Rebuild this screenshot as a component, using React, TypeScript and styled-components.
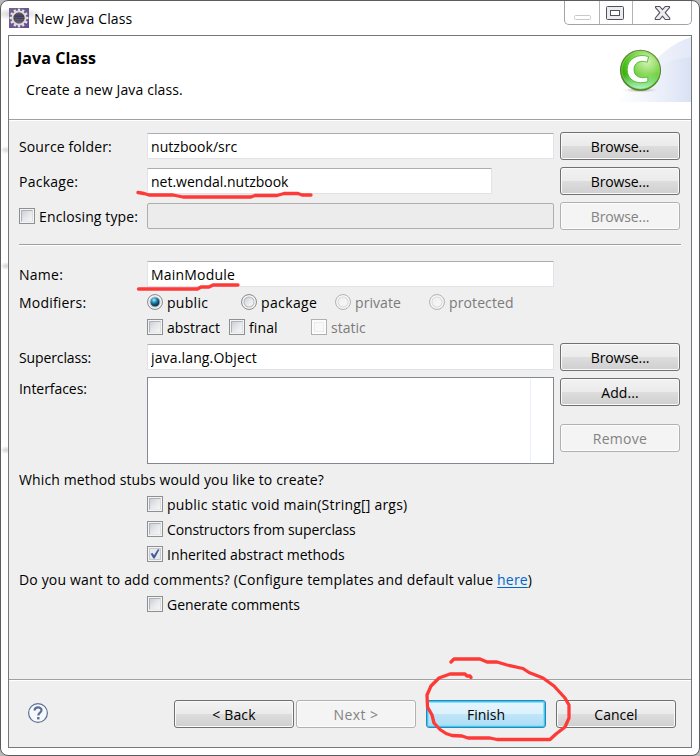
import React from "react";
import styled, { createGlobalStyle, css } from "styled-components";

const GlobalStyle = createGlobalStyle`
  *, *::before, *::after { box-sizing: border-box; }
  body { margin: 0; background: #b9b9b9; }
  button, input, textarea { font: inherit; margin: 0; }
`;

const Window = styled.div`
  position: relative;
  width: 700px;
  height: 756px;
  padding: 0 7px 7px 7px;
  display: flex;
  flex-direction: column;
  background:
    radial-gradient(ellipse 6px 4px at 5px 149px, #d8d8d8, transparent),
    radial-gradient(ellipse 6px 4px at 5px 265px, #d2d2d2, transparent),
    radial-gradient(ellipse 6px 4px at 5px 449px, #d2d2d2, transparent),
    radial-gradient(ellipse 26px 6px at 16px 13px, #cccccc, transparent),
    #fff;
  border: 1px solid #5c5c5e;
  border-radius: 8px;
  overflow: hidden;
  font-family: "Open Sans", "Noto Sans", sans-serif;
  font-size: 14px;
  line-height: 20px;
  color: #000;
`;

const TitleBar = styled.header`
  height: 34px;
  flex: none;
  display: flex;
  align-items: flex-start;
  padding-left: 1px;
`;

const TitleIcon = styled.svg`
  flex: none;
  margin-top: 7px;
`;

const Title = styled.div`
  flex: 1;
  padding: 8px 0 0 5px;
  letter-spacing: 0.15px;
`;

const Caption = styled.div`
  display: flex;
  height: 24px;
  width: 128px;
  border: 1px solid #a3a3a6;
  border-top: 0;
  border-radius: 0 0 5px 5px;
`;

const CaptionButton = styled.button<{ $w: number }>`
  width: ${(p) => p.$w}px;
  padding: 0;
  border: 0;
  background: none;
  display: block;
  & + & { border-left: 1px solid #b4b4b6; }
  svg { display: block; }
`;

const Client = styled.main`
  flex: 1;
  display: flex;
  flex-direction: column;
  border: 1px solid #77787a;
  background: #efefef;
`;

const Banner = styled.section`
  height: 84px;
  flex: none;
  display: flex;
  justify-content: space-between;
  background: #fff;
  border-bottom: 1px solid #a0a0a0;
`;

const BannerText = styled.div`
  padding: 12px 0 0 8px;
`;

const Heading = styled.h1`
  margin: 0;
  font-size: 16px;
  font-weight: 700;
  line-height: 20px;
  letter-spacing: 0.05px;
`;

const Description = styled.p`
  margin: 12px 0 0 9px;
  letter-spacing: 0.12px;
`;

const Form = styled.section`
  flex: 1;
  border-top: 1px solid #fff;
  padding: 11px 9px 0 10px;
`;

const Row = styled.div<{ $h?: number; $top?: number }>`
  display: grid;
  grid-template-columns: 128px 407px 120px;
  align-items: center;
  height: ${(p) => p.$h ?? 28}px;
  margin-top: ${(p) => p.$top ?? 0}px;
  & > :nth-child(3) { margin-left: 6px; }
`;

const Text = styled.span<{ $ls?: number; $dim?: boolean }>`
  display: block;
  padding-top: 2px;
  white-space: nowrap;
  letter-spacing: ${(p) => p.$ls ?? 0}px;
  ${(p) => p.$dim && css`color: #7b7b7b;`}
`;

const Input = styled.input<{ $w?: number; $ls?: number }>`
  width: ${(p) => p.$w ?? 407}px;
  height: 26px;
  padding: 1px 3px 0;
  border: 1px solid #e2e3ea;
  border-top-color: #abadb3;
  border-radius: 1px;
  background: #fff;
  color: #000;
  letter-spacing: ${(p) => p.$ls ?? 0}px;
  outline: 0;
  &:disabled {
    background: #ececec;
    border-color: #afafaf;
    border-radius: 2px;
  }
`;

const PushButton = styled.button<{ $ls?: number; $primary?: boolean }>`
  width: 120px;
  height: 28px;
  padding: 1px 0 0;
  border: 1px solid #707070;
  border-radius: 3px;
  color: #000;
  line-height: 20px;
  letter-spacing: ${(p) => p.$ls ?? 0}px;
  background: linear-gradient(#f2f2f2 0, #ebebeb 50%, #dddddd 50%, #cfcfcf 100%);
  box-shadow: inset 0 0 0 1px #fafafa;
  &:disabled {
    color: #838383;
    background: #f4f4f4;
    border-color: #adb2b5;
    box-shadow: inset 0 0 0 1px #fcfcfc;
  }
  ${(p) =>
    p.$primary &&
    css`
      border-color: #3c7fb1;
      background: linear-gradient(#e8f5fd 0, #dbf1fc 50%, #c0e6f9 50%, #aedcf4 100%);
      box-shadow: inset 0 0 0 1px #2ccdfb, inset 0 0 0 2px #86e2fc;
    `}
`;

const Separator = styled.hr`
  width: 662px;
  height: 2px;
  margin: 14px 0 0;
  border: 0;
  border-top: 1px solid #a0a0a0;
  background: #fff;
`;

const Options = styled.div<{ $cols: string }>`
  display: grid;
  grid-template-columns: ${(p) => p.$cols};
  align-items: center;
`;

const Option = styled.label`
  display: flex;
  align-items: center;
  gap: 4px;
  height: 20px;
`;

const Box = styled.span<{ $off?: boolean }>`
  width: 16px;
  height: 16px;
  flex: none;
  border: 1px solid ${(p) => (p.$off ? "#b1b1b1" : "#8e8f8f")};
  background: #f4f4f4;
  padding: 1px;
  display: block;
  &::before {
    content: "";
    display: ${(p) => (p.$off ? "none" : "block")};
    width: 12px;
    height: 12px;
    border: 1px solid #aeb3b9;
    border-right-color: #dcdfe2;
    border-bottom-color: #e6e8ea;
    background: linear-gradient(135deg, #cbcfd5 0%, #e6e7ea 50%, #f6f6f6 100%);
  }
  ${(p) =>
    p.$off &&
    css`
      background: #f8f8f8;
      box-shadow: inset 0 0 0 2px #fcfcfc, inset 0 0 0 3px #ececec;
    `}
`;

const CheckedBox = styled.svg`
  flex: none;
  display: block;
`;

const Radio = styled.span<{ $on?: boolean; $off?: boolean }>`
  width: 16px;
  height: 16px;
  flex: none;
  border-radius: 50%;
  border: 1px solid ${(p) => (p.$off ? "#b5b5b5" : "#8e8f8f")};
  box-shadow: inset 0 0 0 1.5px #f6f6f6, inset 0 0 0 2.5px ${(p) => (p.$off ? "#d8d8d8" : "#b4b8bd")};
  background: ${(p) =>
    p.$on
      ? "radial-gradient(circle at 50% 50%, transparent 4.4px, #e6ebee 5.2px), radial-gradient(circle at 6px 5px, #bdf0fb 0, #38a5cf 2px, #125c86 4.2px, #0b3450 6px)"
      : p.$off
        ? "linear-gradient(135deg, #ededed, #fafafa)"
        : "linear-gradient(135deg, #c8ccd2 15%, #e8e9eb 50%, #fafafa 85%)"};
`;

const TextArea = styled.div`
  height: 87px;
  border: 1px solid #828790;
  background: #fff;
  padding: 1px 22px 1px 0;
  &::after {
    content: "";
    display: block;
    height: 100%;
    border-right: 1px solid #e8f1fb;
  }
`;

const ListRow = styled(Row)`
  align-items: start;
`;

const ButtonStack = styled.div`
  display: flex;
  flex-direction: column;
  gap: 18px;
  padding-top: 1px;
`;

const Line = styled.div<{ $indent?: boolean; $top?: number }>`
  height: 25px;
  display: flex;
  align-items: center;
  margin-top: ${(p) => p.$top ?? 0}px;
  padding-bottom: 1px;
  padding-left: ${(p) => (p.$indent ? 128 : 0)}px;
`;

const Link = styled.a`
  color: #0066cc;
  text-decoration: underline;
  text-underline-offset: 2px;
`;

const Footer = styled.footer`
  height: 68px;
  flex: none;
  display: flex;
  align-items: center;
  padding: 1px 15px 0 18px;
  border-top: 1px solid #a0a0a0;
  box-shadow: inset 0 1px 0 #fff;
`;

const HelpIcon = styled.svg`
  margin: 0 auto 2px 0;
`;

const FooterButtons = styled.div<{ $gap: number; $left?: number }>`
  display: flex;
  gap: ${(p) => p.$gap}px;
  margin-left: ${(p) => p.$left ?? 0}px;
`;

const Marks = styled.svg`
  position: absolute;
  left: -1px;
  top: -1px;
  pointer-events: none;
`;

function AppIcon() {
  const teeth = Array.from({ length: 12 }, (_, i) => i * 30);
  return (
    <TitleIcon width="20" height="20" viewBox="0 0 20 20">
      <defs>
        <linearGradient id="tile" x1="0" y1="0" x2="1" y2="1">
          <stop offset="0" stopColor="#72658c" />
          <stop offset="1" stopColor="#65499a" />
        </linearGradient>
        <linearGradient id="core" x1="0" y1="0" x2="0" y2="1">
          <stop offset="0" stopColor="#6a6580" />
          <stop offset="0.45" stopColor="#38344c" />
          <stop offset="1" stopColor="#77718c" />
        </linearGradient>
      </defs>
      <rect width="20" height="20" fill="url(#tile)" />
      {teeth.map((a) => (
        <rect key={a} x="8.8" y="0.6" width="2.4" height="4" fill="#e3e0d8" transform={`rotate(${a} 10 10)`} />
      ))}
      <circle cx="10" cy="10" r="6.6" fill="url(#core)" stroke="#dedbd4" strokeWidth="1.9" />
      <path d="M5 9.5h10M5.5 11.5h9" stroke="#6b6784" strokeWidth=".6" />
    </TitleIcon>
  );
}

function ClassBanner() {
  return (
    <svg width="75" height="66" viewBox="0 0 75 66">
      <defs>
        <linearGradient id="sky" x1="0" y1="0" x2="1" y2="0">
          <stop offset="0" stopColor="#fff" />
          <stop offset="0.55" stopColor="#eef2fb" />
          <stop offset="1" stopColor="#e3e9f7" />
        </linearGradient>
        <linearGradient id="sky2" x1="0" y1="0" x2="1" y2="0">
          <stop offset="0" stopColor="#fff" stopOpacity="0" />
          <stop offset="1" stopColor="#d9e1f4" />
        </linearGradient>
        <radialGradient id="ball" cx="0.66" cy="0.28" r="0.8">
          <stop offset="0" stopColor="#d3f3b8" />
          <stop offset="0.38" stopColor="#8fdb60" />
          <stop offset="0.72" stopColor="#43bd14" />
          <stop offset="1" stopColor="#279006" />
        </radialGradient>
        <linearGradient id="glow" x1="0" y1="0" x2="0" y2="1">
          <stop offset="0.6" stopColor="#b8ffd8" stopOpacity="0" />
          <stop offset="1" stopColor="#c4ffe6" stopOpacity="0.9" />
        </linearGradient>
        <radialGradient id="shade">
          <stop offset="0" stopColor="#8a7c80" />
          <stop offset="1" stopColor="#fff" stopOpacity="0" />
        </radialGradient>
      </defs>
      <path d="M0 66C22 54 35 14 75 1v65z" fill="url(#sky)" />
      <path d="M2 66C20 46 40 24 75 21v45z" fill="url(#sky2)" />
      <ellipse cx="24.5" cy="54" rx="21" ry="3" fill="url(#shade)" />
      <circle cx="24.5" cy="34.3" r="20" fill="url(#ball)" stroke="#5f7d38" strokeWidth="1.1" />
      <circle cx="24.5" cy="34.3" r="18.6" fill="url(#glow)" stroke="#8fe05e" strokeWidth="0.8" strokeOpacity="0.7" />
      <path
        d="M32.6 20.6C22.500 17 11.200 22.500 11.200 33.500C11.200 44.800 21.500 48.800 31.800 45.700L31.800 41C25 43 18 40.800 18 33.500C18 26.700 24.500 23.500 31.200 26.300Z"
        fill="#fff"
        stroke="#55b52c"
        strokeWidth="0.9"
        strokeLinejoin="round"
      />
    </svg>
  );
}

function Check({ label, ls, off, checked }: { label: string; ls?: number; off?: boolean; checked?: boolean }) {
  return (
    <Option>
      {checked ? (
        <CheckedBox width="16" height="16" viewBox="0 0 16 16">
          <rect x=".5" y=".5" width="15" height="15" fill="#f4f4f4" stroke="#8e8f8f" />
          <rect x="2.5" y="2.5" width="11" height="11" fill="#e7e9ec" stroke="#c6cad0" />
          <path d="M3.600 7.800 5.600 7 7 9.200 10.800 3.200 12.500 3.400 7.600 12.600 6.400 12.600Z" fill="#435a9c" />
        </CheckedBox>
      ) : (
        <Box $off={off} />
      )}
      <Text $ls={ls} $dim={off}>{label}</Text>
    </Option>
  );
}

function RadioOption({ label, ls, on, off }: { label: string; ls?: number; on?: boolean; off?: boolean }) {
  return (
    <Option>
      <Radio $on={on} $off={off} />
      <Text $ls={ls} $dim={off}>{label}</Text>
    </Option>
  );
}

export default function App() {
  return (
    <>
      <GlobalStyle />
      <Window>
        <TitleBar>
          <AppIcon />
          <Title>New Java Class</Title>
          <Caption>
            <CaptionButton $w={34} aria-label="Minimize">
              <svg width="34" height="23" viewBox="0 0 34 23">
                <rect x="9.5" y="14.5" width="16" height="4" rx="1" fill="#fff" stroke="#c9c9cb" />
              </svg>
            </CaptionButton>
            <CaptionButton $w={33} aria-label="Maximize">
              <svg width="32" height="23" viewBox="0 0 32 23">
                <rect x="6.5" y="5.5" width="17" height="13" rx="1" fill="#ececee" stroke="#50515f" />
                <rect x="10.5" y="9.5" width="9" height="5" fill="#fff" stroke="#50515f" />
              </svg>
            </CaptionButton>
            <CaptionButton $w={59} aria-label="Close">
              <svg width="58" height="23" viewBox="0 0 58 23">
                <path
                  d="M22.5 5.5h4.3l2.7 3.2 2.7-3.2h4.3v1.2l-4.3 5 4.5 5.3v1.5h-4.5l-2.7-3.3-2.7 3.3h-4.5V17l4.5-5.3-4.3-5z"
                  fill="#ececee"
                  stroke="#50515f"
                  strokeWidth="1.1"
                  strokeLinejoin="round"
                />
              </svg>
            </CaptionButton>
          </Caption>
        </TitleBar>
        <Client>
          <Banner>
            <BannerText>
              <Heading>Java Class</Heading>
              <Description>Create a new Java class.</Description>
            </BannerText>
            <ClassBanner />
          </Banner>
          <Form>
            <Row>
              <Text $ls={0.12}>Source folder:</Text>
              <Input defaultValue="nutzbook/src" $ls={0.05} />
              <PushButton $ls={-0.12}>Browse...</PushButton>
            </Row>
            <Row $top={7}>
              <Text $ls={0.25}>Package:</Text>
              <Input $w={345} defaultValue="net.wendal.nutzbook" />
              <PushButton $ls={-0.12}>Browse...</PushButton>
            </Row>
            <Row $top={7}>
              <Check label="Enclosing type:" ls={0.13} />
              <Input disabled />
              <PushButton disabled $ls={-0.12}>Browse...</PushButton>
            </Row>
            <Separator />
            <Row $top={14}>
              <Text $ls={0.25}>Name:</Text>
              <Input defaultValue="MainModule" $ls={0.2} />
            </Row>
            <Row>
              <Text $ls={0.2}>Modifiers:</Text>
              <Options $cols="94px 94px 94px 1fr">
                <RadioOption label="public" ls={0.3} on />
                <RadioOption label="package" ls={0.37} />
                <RadioOption label="private" ls={0.07} off />
                <RadioOption label="protected" ls={0.11} off />
              </Options>
            </Row>
            <Row $h={22}>
              <span />
              <Options $cols="82px 82px 1fr">
                <Check label="abstract" ls={-0.03} />
                <Check label="final" ls={0.1} />
                <Check label="static" off />
              </Options>
            </Row>
            <Row $top={5}>
              <Text $ls={-0.12}>Superclass:</Text>
              <Input defaultValue="java.lang.Object" $ls={0.15} />
              <PushButton $ls={-0.12}>Browse...</PushButton>
            </Row>
            <ListRow $h={87} $top={6}>
              <Text $ls={-0.05}>Interfaces:</Text>
              <TextArea />
              <ButtonStack>
                <PushButton $ls={0.05}>Add...</PushButton>
                <PushButton disabled $ls={0.3}>Remove</PushButton>
              </ButtonStack>
            </ListRow>
            <Line $top={3}>
              <Text $ls={0.13}>Which method stubs would you like to create?</Text>
            </Line>
            <Line $indent>
              <Check label="public static void main(String[] args)" ls={0.21} />
            </Line>
            <Line $indent>
              <Check label="Constructors from superclass" ls={-0.13} />
            </Line>
            <Line $indent>
              <Check label="Inherited abstract methods" ls={-0.02} checked />
            </Line>
            <Line>
              <Text $ls={0.16}>
                Do you want to add comments? (Configure templates and default value <Link>here</Link>)
              </Text>
            </Line>
            <Line $indent>
              <Check label="Generate comments" ls={-0.04} />
            </Line>
          </Form>
          <Footer>
            <HelpIcon width="22" height="22" viewBox="0 0 22 22">
              <circle cx="11" cy="11" r="9.4" fill="#f6f8fb" stroke="#5d7096" strokeWidth="1.2" />
              <path
                d="M7.6 8.6C7.6 4.3 14.5 4.4 14.5 8.2C14.5 10.6 11.3 10.6 11.3 13.6"
                fill="none"
                stroke="#5a6f99"
                strokeWidth="2.2"
              />
              <rect x="10.1" y="15" width="2.4" height="2.4" fill="#5a6f99" />
            </HelpIcon>
            <FooterButtons $gap={2}>
              <PushButton $ls={0.17}>&lt; Back</PushButton>
              <PushButton disabled $ls={0.4}>Next &gt;</PushButton>
            </FooterButtons>
            <FooterButtons $gap={10} $left={10}>
              <PushButton $primary>Finish</PushButton>
              <PushButton>Cancel</PushButton>
            </FooterButtons>
          </Footer>
        </Client>
        <Marks width="700" height="756" viewBox="0 0 700 756" fill="none" stroke="#fd3a37" strokeWidth="3.3" strokeLinecap="round" strokeLinejoin="round">
          <path d="M138 192.500L144 193.500 149 195H173L178 196 183 197H251L255 195.500H277L284 193.500H298L302 195H311" />
          <path d="M138.500 289H197.500L201 287H209L213 285H238" />
          <path d="M451 662L454 659H480L487 662H497L507 665 523 668.500 529 672.500 543 678 554 686 565 698 569 705V718L565 727 556 734 550 739.500H497L490 738H468L462 736 452 735.500 446 733.500 440 729.500 434 723 432 715 427.500 707 427 695 431 686 439 678 450 674H465L467 676H470L471 677.500" />
        </Marks>
      </Window>
    </>
  );
}
